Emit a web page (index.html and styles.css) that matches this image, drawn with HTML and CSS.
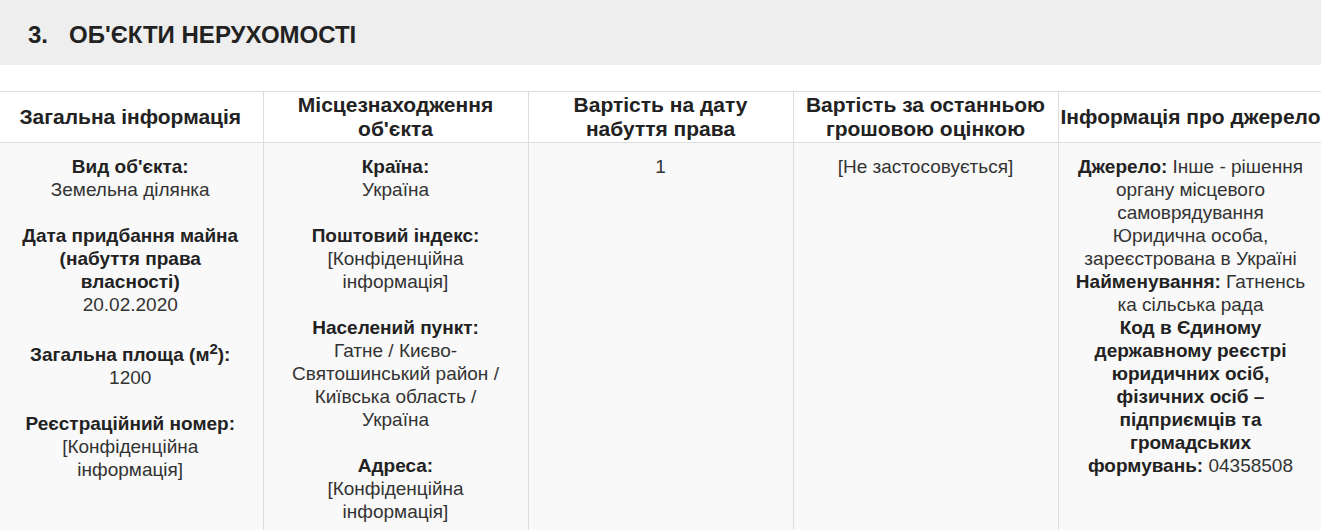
FILE: index.html
```html
<!DOCTYPE html>
<html lang="uk">
<head>
<meta charset="utf-8">
<title>Об'єкти нерухомості</title>
<link rel="stylesheet" href="styles.css">
</head>
<body>
<div class="section-head">
  <h2 class="section-title"><span class="num">3.</span>ОБ'ЄКТИ НЕРУХОМОСТІ</h2>
</div>
<div class="table-wrap">
<table class="obj-table">
  <colgroup>
    <col class="c1"><col class="c2"><col class="c3"><col class="c4"><col class="c5">
  </colgroup>
  <thead>
    <tr>
      <th>Загальна інформація</th>
      <th>Місцезнаходження<br>об'єкта</th>
      <th>Вартість на дату<br>набуття права</th>
      <th>Вартість за останньою<br>грошовою оцінкою</th>
      <th>Інформація про джерело</th>
    </tr>
  </thead>
  <tbody>
    <tr>
      <td>
        <div class="item"><b>Вид об'єкта:</b><br>Земельна ділянка</div>
        <div class="item"><b>Дата придбання майна (набуття права власності)</b><br>20.02.2020</div>
        <div class="item"><b>Загальна площа (м<sup>2</sup>):</b><br>1200</div>
        <div class="item"><b>Реєстраційний номер:</b><br>[Конфіденційна інформація]</div>
      </td>
      <td>
        <div class="item"><b>Країна:</b><br>Україна</div>
        <div class="item"><b>Поштовий індекс:</b><br>[Конфіденційна інформація]</div>
        <div class="item"><b>Населений пункт:</b><br>Гатне / Києво-Святошинський район / Київська область / Україна</div>
        <div class="item"><b>Адреса:</b><br>[Конфіденційна інформація]</div>
      </td>
      <td>1</td>
      <td>[Не застосовується]</td>
      <td>
        <b>Джерело:</b> Інше - рішення органу місцевого самоврядування<br>Юридична особа, зареєстрована в Україні<br><b>Найменування:</b> Гатненсь<wbr>ка сільська рада<br><b>Код в Єдиному державному реєстрі юридичних осіб, фізичних осіб – підприємців та громадських формувань:</b> 04358508
      </td>
    </tr>
  </tbody>
</table>
</div>
</body>
</html>
```

FILE: styles.css
```css
html, body {
  margin: 0;
  padding: 0;
  background: #ffffff;
}
body {
  font-family: "Liberation Sans", Arial, sans-serif;
  color: #333333;
  font-size: 19px;
  line-height: 23px;
  overflow: hidden;
}
.section-head {
  background: #eeeeee;
  height: 65px;
  box-sizing: border-box;
  display: flex;
  align-items: center;
  padding-left: 28px;
  padding-top: 4px;
}
.section-title {
  margin: 0;
  font-size: 24px;
  line-height: 28px;
  font-weight: bold;
  color: #222222;
}
.num {
  margin-right: 21px;
}
.table-wrap {
  margin-top: 26px;
  width: 1325px;
}
.obj-table {
  border-collapse: collapse;
  table-layout: fixed;
  width: 1325px;
  margin-left: -2px;
}
.obj-table col { width: 265px; }
.obj-table th,
.obj-table td {
  border: 1px solid #dddddd;
  text-align: center;
  vertical-align: top;
}
.obj-table th:first-child,
.obj-table td:first-child { border-left: none; }
.obj-table th {
  font-size: 21px;
  line-height: 24px;
  font-weight: bold;
  color: #222222;
  padding: 1px 2px;
  white-space: nowrap;
  vertical-align: middle;
  background: #ffffff;
}
.obj-table td {
  background: #f9f9f9;
  padding: 12px 16px;
}
.obj-table b { color: #222222; }
.item { margin-bottom: 23px; }
.item:last-child { margin-bottom: 0; }
sup { font-size: 15px; line-height: 20px; }
```
